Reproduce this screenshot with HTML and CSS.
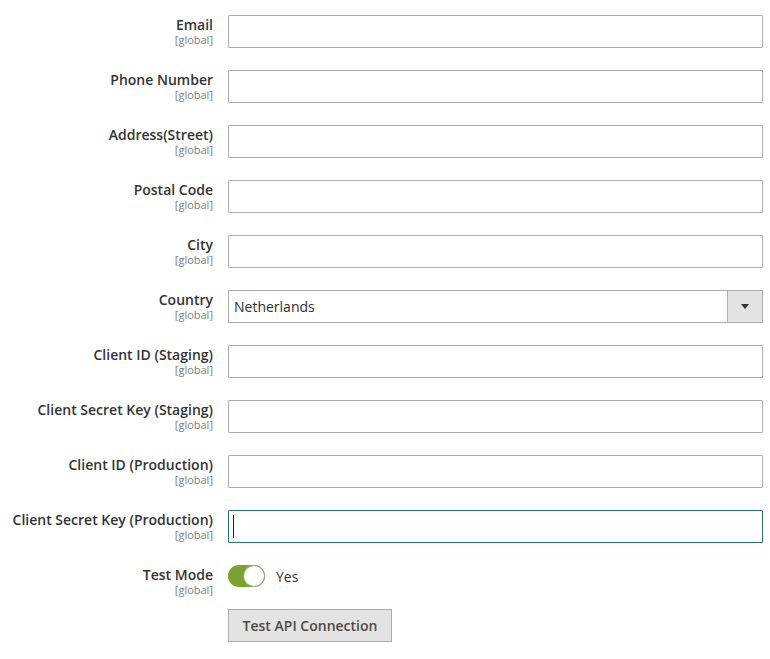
FILE: index.html
```html
<!DOCTYPE html>
<html>
<head>
<meta charset="utf-8">
<link rel="stylesheet" href="styles.css">
</head>
<body>
<div class="form">
  <div class="row">
    <div class="label"><span class="name">Email</span><span class="scope">[global]</span></div>
    <div class="control"><input class="input" type="text"></div>
  </div>
  <div class="row">
    <div class="label"><span class="name">Phone Number</span><span class="scope">[global]</span></div>
    <div class="control"><input class="input" type="text"></div>
  </div>
  <div class="row">
    <div class="label"><span class="name">Address(Street)</span><span class="scope">[global]</span></div>
    <div class="control"><input class="input" type="text"></div>
  </div>
  <div class="row">
    <div class="label"><span class="name">Postal Code</span><span class="scope">[global]</span></div>
    <div class="control"><input class="input" type="text"></div>
  </div>
  <div class="row">
    <div class="label"><span class="name">City</span><span class="scope">[global]</span></div>
    <div class="control"><input class="input" type="text"></div>
  </div>
  <div class="row">
    <div class="label"><span class="name">Country</span><span class="scope">[global]</span></div>
    <div class="control">
      <div class="select">
        <span class="select-value">Netherlands</span>
        <span class="select-arrow"><span class="tri"></span></span>
      </div>
    </div>
  </div>
  <div class="row">
    <div class="label"><span class="name">Client ID (Staging)</span><span class="scope">[global]</span></div>
    <div class="control"><input class="input" type="text"></div>
  </div>
  <div class="row">
    <div class="label"><span class="name">Client Secret Key (Staging)</span><span class="scope">[global]</span></div>
    <div class="control"><input class="input" type="text"></div>
  </div>
  <div class="row">
    <div class="label"><span class="name">Client ID (Production)</span><span class="scope">[global]</span></div>
    <div class="control"><input class="input" type="text"></div>
  </div>
  <div class="row">
    <div class="label"><span class="name">Client Secret Key (Production)</span><span class="scope">[global]</span></div>
    <div class="control focus-wrap"><input class="input input-focus" type="text"><span class="caret"></span></div>
  </div>
  <div class="row row-switch">
    <div class="label"><span class="name">Test Mode</span><span class="scope">[global]</span></div>
    <div class="control switch-control">
      <span class="switch"><span class="knob"></span></span>
      <span class="switch-label">Yes</span>
    </div>
  </div>
  <div class="row">
    <div class="label"></div>
    <div class="control"><button class="btn" type="button">Test API Connection</button></div>
  </div>
</div>
</body>
</html>
```
FILE: styles.css
```css
html, body {
  margin: 0;
  padding: 0;
  background: #ffffff;
}
body {
  font-family: "Open Sans", "Liberation Sans", sans-serif;
  color: #303030;
}
.form {
  padding-top: 15px;
  width: 763px;
}
.row {
  display: flex;
  gap: 15px;
  margin-bottom: 22px;
}
.row-switch {
  margin-bottom: 13px;
}
.label {
  width: 213px;
  flex: none;
  display: flex;
  flex-direction: column;
  align-items: flex-end;
  padding-top: 1px;
  text-align: right;
}
.name {
  font-size: 14px;
  line-height: 18px;
  font-weight: 600;
  color: #333333;
  white-space: nowrap;
}
.scope {
  font-size: 11px;
  line-height: 12px;
  color: #808080;
}
.control {
  flex: 1;
  min-width: 0;
}
.input {
  display: block;
  box-sizing: border-box;
  width: 100%;
  height: 33px;
  margin: 0;
  border: 1px solid #adadad;
  border-radius: 1px;
  background: #fff;
  padding: 0 5px;
  font-family: inherit;
  font-size: 14px;
  outline: none;
}
.focus-wrap {
  position: relative;
}
.input-focus {
  border-color: #2d6f72;
}
.caret {
  position: absolute;
  left: 5px;
  top: 5px;
  width: 1px;
  height: 23px;
  background: #222;
}
.select {
  box-sizing: border-box;
  height: 33px;
  border: 1px solid #adadad;
  display: flex;
  align-items: center;
  background: #fff;
}
.select-value {
  flex: 1;
  padding-left: 5px;
  font-size: 14px;
  color: #303030;
}
.select-arrow {
  width: 34px;
  align-self: stretch;
  background: #e3e3e3;
  border-left: 1px solid #adadad;
  display: flex;
  align-items: center;
  justify-content: center;
}
.tri {
  width: 0;
  height: 0;
  border-left: 4px solid transparent;
  border-right: 4px solid transparent;
  border-top: 5px solid #333;
}
.switch-control {
  display: flex;
  align-items: center;
  gap: 11px;
  height: 22px;
}
.switch {
  position: relative;
  box-sizing: border-box;
  width: 37px;
  height: 22px;
  border-radius: 11px;
  background: #79a22e;
}
.knob {
  position: absolute;
  right: 0;
  top: 0;
  box-sizing: border-box;
  width: 22px;
  height: 22px;
  border-radius: 50%;
  background: #fff;
  border: 1px solid #8fa86a;
}
.switch-label {
  font-size: 14px;
  color: #303030;
}
.btn {
  box-sizing: border-box;
  height: 33px;
  width: 164px;
  border: 1px solid #adadad;
  background: #e3e3e3;
  color: #514943;
  font-family: inherit;
  font-size: 14px;
  font-weight: 600;
  padding: 0;
  margin: 0;
  border-radius: 0;
}
```
